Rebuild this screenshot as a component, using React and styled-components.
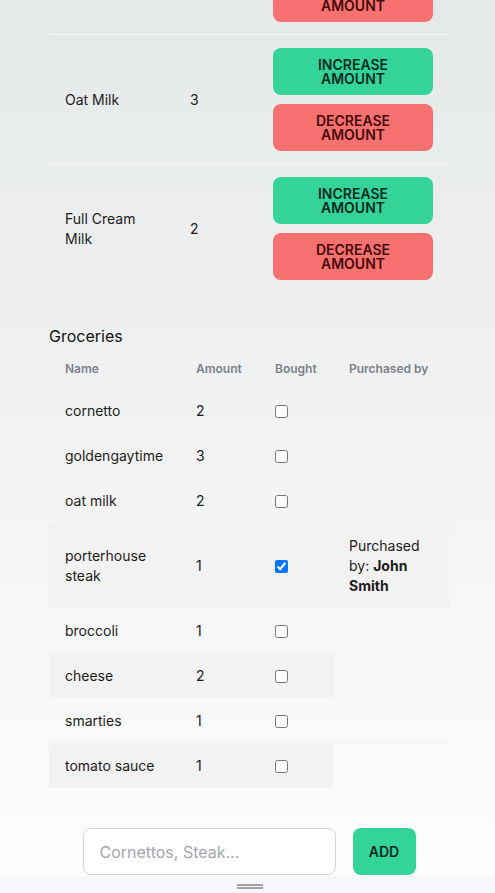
import React from 'react'
import styled, { createGlobalStyle } from 'styled-components'

const GlobalStyle = createGlobalStyle`
  html, body {
    margin: 0;
    padding: 0;
  }
  body {
    font-family: Inter, "Noto Sans", sans-serif;
    color: #1c1c1c;
    background: linear-gradient(180deg, #e5e8e9 0%, #f4f5f5 60%, #fdfdfd 100%);
    background-attachment: fixed;
    min-height: 100vh;
  }
`

const milk = [
  { name: 'Skim Milk', amount: 1 },
  { name: 'Oat Milk', amount: 3 },
  { name: 'Full Cream Milk', amount: 2 },
]

const groceries = [
  { name: 'cornetto', amount: 2, bought: false },
  { name: 'goldengaytime', amount: 3, bought: false },
  { name: 'oat milk', amount: 2, bought: false },
  { name: 'porterhouse steak', amount: 1, bought: true, by: 'John Smith' },
  { name: 'broccoli', amount: 1, bought: false },
  { name: 'cheese', amount: 2, bought: false },
  { name: 'smarties', amount: 1, bought: false },
  { name: 'tomato sauce', amount: 1, bought: false },
]

function App() {
  return (
    <>
      <GlobalStyle />
      <Page>
        <MilkTable>
          <tbody>
            {milk.map((item, index) => (
              <MilkRow key={index} first={index === 0}>
                <MilkName>{item.name}</MilkName>
                <MilkAmount>{item.amount}</MilkAmount>
                <MilkActions>
                  <ButtonStack>
                    <AmountButton variant="increase">INCREASE<br />AMOUNT</AmountButton>
                    <AmountButton variant="decrease">DECREASE<br />AMOUNT</AmountButton>
                  </ButtonStack>
                </MilkActions>
              </MilkRow>
            ))}
          </tbody>
        </MilkTable>

        <Heading>Groceries</Heading>
        <GroceryTable>
          <colgroup>
            <col style={{ width: 131 }} />
            <col style={{ width: 79 }} />
            <col style={{ width: 74 }} />
            <col style={{ width: 116 }} />
          </colgroup>
          <thead>
            <tr>
              <HeadCell>Name</HeadCell>
              <HeadCell>Amount</HeadCell>
              <HeadCell>Bought</HeadCell>
              <HeadCell>Purchased by</HeadCell>
            </tr>
          </thead>
          <tbody>
            {groceries.map((item, index) => (
              <GroceryRow key={index}>
                <Cell>{item.name}</Cell>
                <Cell>{item.amount}</Cell>
                <Cell>
                  <Check type="checkbox" defaultChecked={item.bought} />
                </Cell>
                {item.bought && (
                  <Cell>
                    Purchased by: <strong>{item.by}</strong>
                  </Cell>
                )}
              </GroceryRow>
            ))}
          </tbody>
        </GroceryTable>

        <AddForm onSubmit={(e) => e.preventDefault()}>
          <AddInput placeholder="Cornettos, Steak..." />
          <AddButton type="submit">ADD</AddButton>
        </AddForm>
      </Page>
      <BottomBar>
        <Handle>
          <span />
          <span />
        </Handle>
      </BottomBar>
    </>
  )
}

const Page = styled.div`
  width: 400px;
  padding-left: 49px;
  margin-top: -94px;
  padding-bottom: 40px;
`

const MilkTable = styled.table`
  width: 400px;
  border-collapse: collapse;
  table-layout: fixed;
  font-size: 14px;
  line-height: 20px;
`

const MilkRow = styled.tr`
  border-top: ${(p) => (p.first ? 'none' : '1px solid #f2f4f5')};
`

const MilkName = styled.td`
  width: 93px;
  padding: 13px 16px 12px;
`

const MilkAmount = styled.td`
  width: 51px;
  padding: 13px 16px 12px;
`

const MilkActions = styled.td`
  width: 160px;
  padding: 13px 16px 12px;
`

const ButtonStack = styled.div`
  display: flex;
  flex-direction: column;
  gap: 9px;
`

const AmountButton = styled.button`
  height: 47px;
  width: 160px;
  border: none;
  border-radius: 8px;
  font-family: Inter, sans-serif;
  font-size: 14px;
  font-weight: 600;
  line-height: 14px;
  background: ${(p) => (p.variant === 'increase' ? '#34d399' : '#f87171')};
  color: ${(p) => (p.variant === 'increase' ? '#022c22' : '#450a0a')};
  cursor: pointer;
`

const Heading = styled.h2`
  margin: 32px 0 1px;
  font-size: 16px;
  font-weight: 400;
  line-height: 24px;
  color: #111;
`

const GroceryTable = styled.table`
  width: 400px;
  border-collapse: collapse;
  table-layout: fixed;
  font-size: 14px;
  line-height: 20px;
`

const HeadCell = styled.th`
  text-align: left;
  padding: 12px 10px 12px 16px;
  font-size: 12px;
  line-height: 16px;
  font-weight: 600;
  color: #7b808a;
`

const GroceryRow = styled.tr`
  border-bottom: 1px solid #f2f3f3;
  &:nth-child(even) {
    background: #f2f2f2;
  }
  &:last-child {
    border-bottom: none;
  }
`

const Cell = styled.td`
  padding: 12px 10px 12px 16px;
  vertical-align: middle;
  strong {
    font-weight: 700;
  }
`

const Check = styled.input`
  display: block;
  margin: 0;
  width: 13px;
  height: 13px;
`

const AddForm = styled.form`
  display: flex;
  justify-content: center;
  gap: 17px;
  margin-top: 40px;
`

const AddInput = styled.input`
  box-sizing: border-box;
  width: 253px;
  height: 47px;
  padding: 0 16px;
  border: 1px solid #d4d4d4;
  border-radius: 8px;
  background: #fff;
  font-family: Inter, sans-serif;
  font-size: 16px;
  color: #111;
  &::placeholder {
    color: #a3a6ad;
  }
`

const AddButton = styled.button`
  width: 63px;
  height: 47px;
  border: none;
  border-radius: 8px;
  background: #34d399;
  color: #022c22;
  font-family: Inter, sans-serif;
  font-size: 14px;
  font-weight: 600;
  cursor: pointer;
`

const BottomBar = styled.div`
  position: fixed;
  left: 0;
  right: 0;
  bottom: 0;
  height: 17px;
  background: #f6f7fa;
  display: flex;
  justify-content: center;
  align-items: center;
  padding-left: 5px;
`

const Handle = styled.div`
  display: flex;
  flex-direction: column;
  gap: 1px;
  margin-top: 3px;
  span {
    display: block;
    width: 26px;
    height: 2px;
    background: #a2a2a2;
  }
`

export default App
